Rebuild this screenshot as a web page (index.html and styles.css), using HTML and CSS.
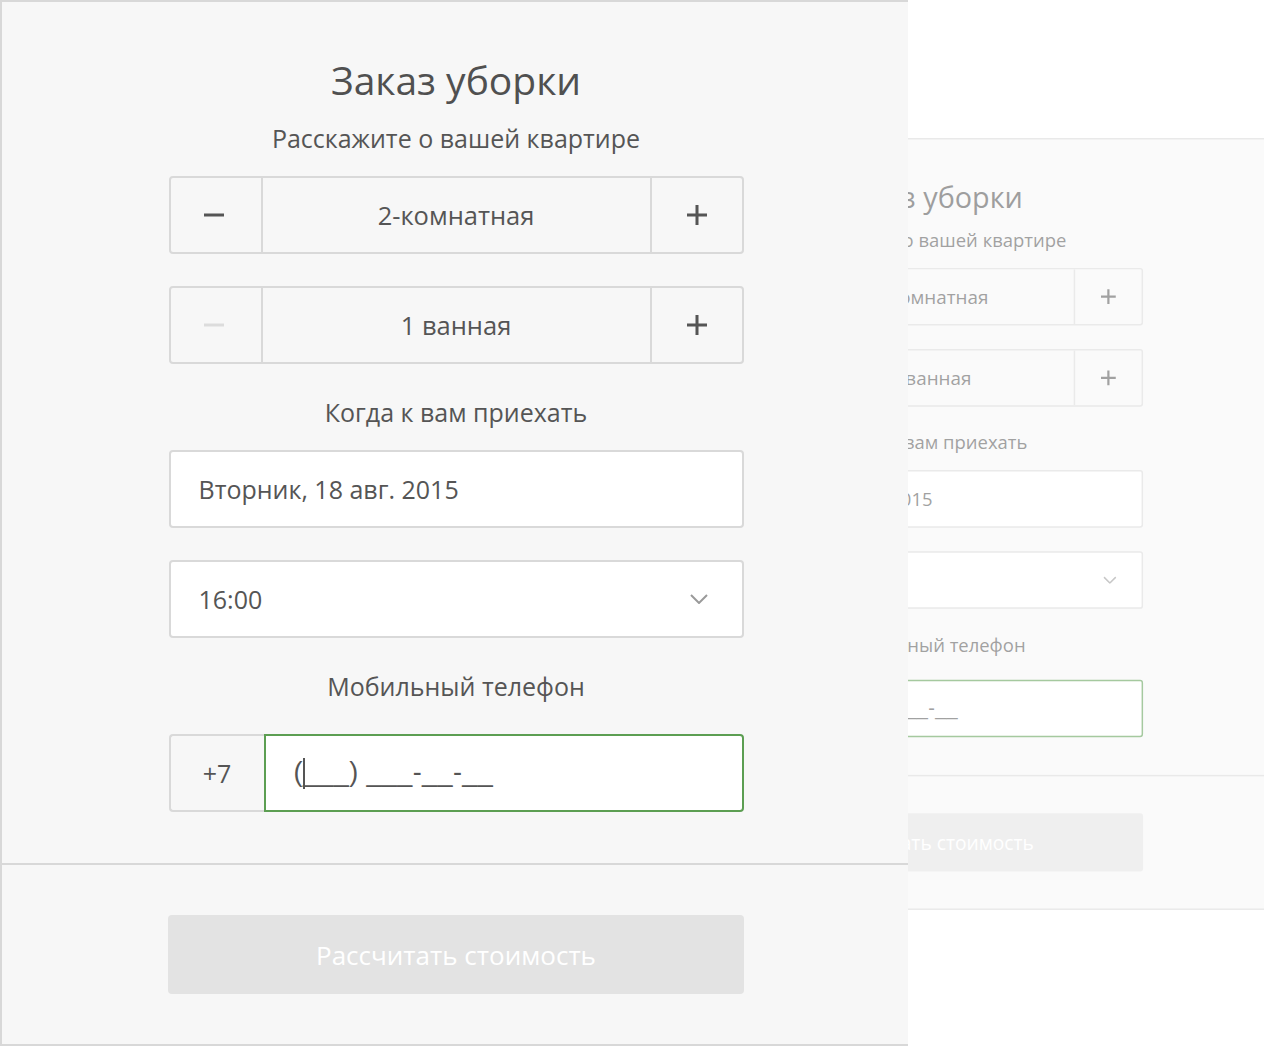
FILE: index.html
```html
<!DOCTYPE html>
<html lang="ru">
<head>
<meta charset="utf-8">
<title>Заказ уборки</title>
<link rel="stylesheet" href="styles.css">
</head>
<body>
<div class="stage">
  <section class="sheet sheet--back" aria-hidden="true">
    <div class="sheet-body">
      <h1 class="title">Заказ уборки</h1>
      <p class="label label--first">Расскажите о вашей квартире</p>
      <div class="stepper">
        <span class="step-btn"><svg width="22" height="22" viewBox="0 0 22 22"><path d="M1 11h20" stroke="#555" stroke-width="3"/></svg></span>
        <span class="step-value">2-комнатная</span>
        <span class="step-btn"><svg width="22" height="22" viewBox="0 0 22 22"><path d="M1 11h20M11 1v20" stroke="#555" stroke-width="3"/></svg></span>
      </div>
      <div class="stepper stepper--next">
        <span class="step-btn"><svg width="22" height="22" viewBox="0 0 22 22"><path d="M1 11h20" stroke="#dcdcdc" stroke-width="3"/></svg></span>
        <span class="step-value">1 ванная</span>
        <span class="step-btn"><svg width="22" height="22" viewBox="0 0 22 22"><path d="M1 11h20M11 1v20" stroke="#555" stroke-width="3"/></svg></span>
      </div>
      <p class="label">Когда к вам приехать</p>
      <div class="field">Вторник, 18 авг. 2015</div>
      <div class="field field--select">16:00<svg class="chevron" width="18" height="10" viewBox="0 0 18 10"><path d="M1 1l8 8 8-8" fill="none" stroke="#9a9a9a" stroke-width="2"/></svg></div>
      <p class="label label--phone">Мобильный телефон</p>
      <div class="phone">
        <span class="phone-prefix">+7</span>
        <span class="phone-input"><span class="mask">(___) ___-__-__</span></span>
      </div>
    </div>
    <div class="sheet-footer">
      <span class="submit">Рассчитать стоимость</span>
    </div>
  </section>

  <section class="sheet sheet--front">
    <div class="sheet-body">
      <h1 class="title">Заказ уборки</h1>
      <p class="label label--first">Расскажите о вашей квартире</p>
      <div class="stepper">
        <button class="step-btn" type="button" aria-label="Меньше комнат"><svg width="22" height="22" viewBox="0 0 22 22"><path d="M1 11h20" stroke="#555" stroke-width="3"/></svg></button>
        <span class="step-value">2-комнатная</span>
        <button class="step-btn" type="button" aria-label="Больше комнат"><svg width="22" height="22" viewBox="0 0 22 22"><path d="M1 11h20M11 1v20" stroke="#555" stroke-width="3"/></svg></button>
      </div>
      <div class="stepper stepper--next">
        <button class="step-btn" type="button" aria-label="Меньше ванных" disabled><svg width="22" height="22" viewBox="0 0 22 22"><path d="M1 11h20" stroke="#dcdcdc" stroke-width="3"/></svg></button>
        <span class="step-value">1 ванная</span>
        <button class="step-btn" type="button" aria-label="Больше ванных"><svg width="22" height="22" viewBox="0 0 22 22"><path d="M1 11h20M11 1v20" stroke="#555" stroke-width="3"/></svg></button>
      </div>
      <p class="label">Когда к вам приехать</p>
      <div class="field">Вторник, 18 авг. 2015</div>
      <div class="field field--select">16:00<svg class="chevron" width="18" height="10" viewBox="0 0 18 10"><path d="M1 1l8 8 8-8" fill="none" stroke="#9a9a9a" stroke-width="2"/></svg></div>
      <p class="label label--phone">Мобильный телефон</p>
      <div class="phone">
        <span class="phone-prefix">+7</span>
        <span class="phone-input"><span class="mask">(<span class="caret"></span>___) ___-__-__</span></span>
      </div>
    </div>
    <div class="sheet-footer">
      <button class="submit" type="button" disabled>Рассчитать стоимость</button>
    </div>
  </section>
</div>
</body>
</html>
```

FILE: styles.css
```css
* { box-sizing: border-box; }

html, body {
  margin: 0;
  padding: 0;
  background: #ffffff;
}

body {
  width: 1264px;
  height: 1048px;
  overflow: hidden;
  font-family: "Open Sans", "Noto Sans", sans-serif;
  color: #555555;
}

.stage {
  position: relative;
  width: 1264px;
  height: 1048px;
}

.sheet {
  width: 908px;
  background: #f7f7f7;
  border-top: 2px solid #d8d8d8;
  border-left: 2px solid #d8d8d8;
  border-bottom: 2px solid #d8d8d8;
}

.sheet--front {
  position: relative;
  z-index: 2;
}

.sheet--back {
  position: absolute;
  left: 594px;
  top: 138px;
  z-index: 1;
  transform: scale(0.738);
  transform-origin: 0 0;
  opacity: 0.55;
}

.sheet-body {
  display: flex;
  flex-direction: column;
  align-items: center;
  padding: 55px 0 51px 2px;
}

.title {
  margin: 0;
  font-size: 39px;
  line-height: 46px;
  font-weight: 400;
  color: #505050;
}

.label {
  margin: 33px 0 23px;
  font-size: 25px;
  line-height: 30px;
  color: #555555;
}

.label--first {
  margin-top: 20px;
}

.label--phone {
  margin-bottom: 33px;
}

.stepper {
  display: grid;
  grid-template-columns: 90px 1fr 90px;
  width: 575px;
  height: 78px;
  border: 2px solid #d9d9d9;
  border-radius: 4px;
}

.stepper--next {
  margin-top: 32px;
}

.step-btn {
  display: flex;
  align-items: center;
  justify-content: center;
  margin: 0;
  padding: 0 4px 0 0;
  border: 0;
  background: transparent;
  font: inherit;
}

.step-btn:last-child {
  padding: 0;
}

.step-btn svg {
  display: block;
}

.step-value {
  display: flex;
  align-items: center;
  justify-content: center;
  border-left: 2px solid #d9d9d9;
  border-right: 2px solid #d9d9d9;
  font-size: 25.5px;
  color: #555555;
}

.field {
  display: flex;
  align-items: center;
  justify-content: space-between;
  width: 575px;
  height: 78px;
  padding: 0 34px 0 28px;
  background: #ffffff;
  border: 2px solid #d9d9d9;
  border-radius: 4px;
  font-size: 25px;
  color: #555555;
}

.field--select {
  margin-top: 32px;
}

.chevron {
  display: block;
}

.phone {
  display: flex;
  width: 575px;
  height: 78px;
}

.phone-prefix {
  display: flex;
  align-items: center;
  justify-content: center;
  width: 95px;
  border: 2px solid #d9d9d9;
  border-right: 0;
  border-radius: 4px 0 0 4px;
  font-size: 25px;
  color: #555555;
}

.phone-input {
  flex: 1;
  display: flex;
  align-items: center;
  padding-left: 28px;
  background: #ffffff;
  border: 2px solid #5c9e52;
  border-radius: 0 4px 4px 0;
  color: #555555;
}

.mask {
  font-family: "Liberation Sans", "Open Sans", sans-serif;
  font-size: 27px;
  letter-spacing: 0.4px;
  white-space: pre;
}

.caret {
  display: inline-block;
  width: 2px;
  height: 31px;
  margin-right: -2px;
  background: #555555;
  vertical-align: -8px;
}

.sheet-footer {
  display: flex;
  justify-content: center;
  padding: 50px 0 50px 2px;
  border-top: 2px solid #d8d8d8;
}

.submit {
  display: flex;
  align-items: center;
  justify-content: center;
  width: 576px;
  height: 79px;
  margin: 0;
  padding: 0;
  border: 0;
  border-radius: 4px;
  background: #e3e3e3;
  color: #ffffff;
  font-family: inherit;
  font-size: 26px;
}
```
